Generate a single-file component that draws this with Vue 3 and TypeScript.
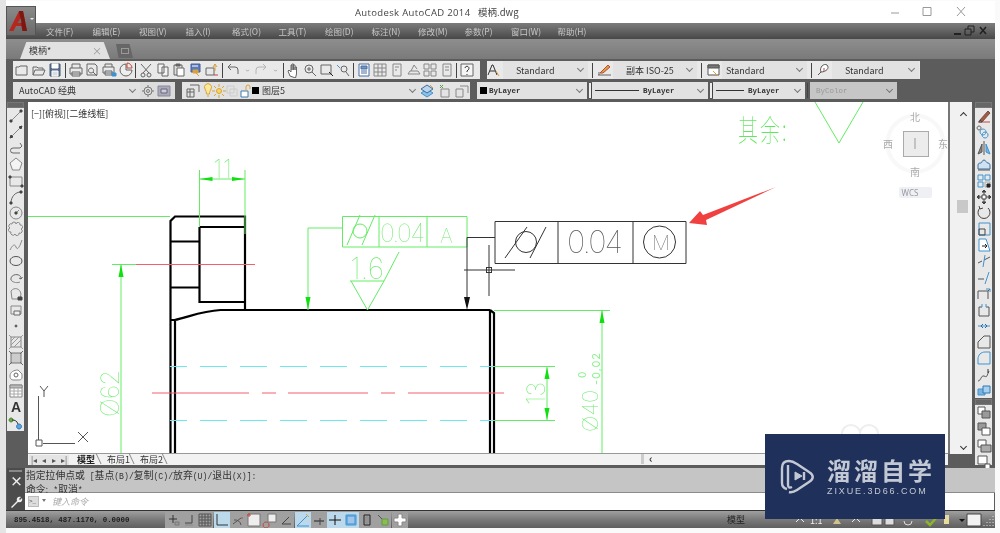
<script setup lang="ts">
import { h } from 'vue'

// [path, stroke, fill]
type Stroke = [string, string?, string?]

const G = '#666'
const B = '#3f93cf'
const R = '#c0483c'
const O = '#d9a23c'
const L = '#5f9e3c'

const icons: Record<string, Stroke[]> = {
  new: [['M2 5h3l1-1h7v9H2z']],
  open: [['M2 13V5h4l1 1h5v2M2 13l2-5h10l-2 5z']],
  save: [['M3 2h10v12H3z', '#445a78', '#5c6f8c'], ['M5 2h6v4H5z', '#fff', '#fff'], ['M5 9h6v5H5z', '#fff', '#d8dde4']],
  print: [['M4 6V2h8v4M2 6h12v6H2zM4 10h8v4H4z']],
  preview: [['M3 2h8l2 2v9H3zM7 6a2.500 2.500 0 1 0 .1 0M9 10l4 4']],
  plot: [['M4 5V2h7v3M2 5h11v6H2zM4 9h7v4H4z'], ['M11 11h4v3h-4z', B, B]],
  publish: [['M8 2a6 6 0 1 0 6 6H8z', G, '#eee'], ['M9 1v5h5a5 5 0 0 0-5-5z', R]],
  cut: [['M3 2l8 9M13 2L5 11M3 13a2 2 0 1 0 4 0 2 2 0 1 0-4 0M9 13a2 2 0 1 0 4 0 2 2 0 1 0-4 0']],
  copy: [['M3 2h6v9H3zM7 5h6v9H7z', G, '#f4f4f4']],
  paste: [['M3 3h8v10H3z', G, '#ddd'], ['M6 6h7v8H6z', G, '#fff'], ['M5 2h4v2H5z', G, G]],
  match: [['M3 2h9v8H3z', '#405f9a', '#5d7dba'], ['M6 9l5 5', O], ['M5 8h5v3H5z', O, O], ['M4 4h6', '#fff']],
  block: [['M2 6h8v7H2z'], ['M11 2v7M9 5l2-3 2 3', O], ['M10 13h4', R]],
  undo: [['M13 12V8a3 3 0 0 0-3-3H3M6 2L3 5l3 3']],
  redo: [['M3 12V8a3 3 0 0 1 3-3h7M10 2l3 3-3 3', '#b5b5b5']],
  drop: [['M6 7l2 2 2-2', '#888']],
  pan: [['M5 14L3 9l1-1 2 2V3l1 0v5-6h1.500v6-5H10v5-3h1.500v7l-1 4z', G, '#fff']],
  zoom1: [['M3 7a4 4 0 1 0 8 0 4 4 0 1 0-8 0M10 10l4 4M7 5v4M5 7h4']],
  zoom2: [['M2 3h10v9H2z'], ['M10 10l4 4', '#222']],
  zoom3: [['M6 7a3 3 0 1 0 6 0 3 3 0 1 0-6 0M11 10l3 4'], ['M2 3l3 3', B]],
  props: [['M3 2h10v12H3z', '#4b6ea0', '#fff'], ['M5 4h6v3H5z', '#4b6ea0', '#6f93c4'], ['M5 9h6M5 11h6', '#4b6ea0']],
  grid: [['M2 2h12v12H2zM2 6h12M2 10h12M6 2v12M10 2v12', '#888']],
  sheet: [['M4 2h8v12H4zM6 5h4M6 8h2', '#888']],
  tool: [['M2 12h12l-2-3H4zM5 9l3-6 3 4', '#888']],
  calc: [['M2 2h5v5H2zM9 9h5v5H9zM9 2h5v5H9zM2 9h5v5H2z', '#888']],
  pad: [['M4 2h8v12H4zM6 5h4M6 8h4', '#888']],
  help: [['M2 2h12v12H2z', G, '#f5f5f5'], ['M6 6a2 2 0 1 1 3 2l-1 1v1M8 12v1', '#333']],
  style: [['M3 13L7 3h1l4 10M5 9h5', '#333'], ['M11 9l3 5', O]],
  dim: [['M2 13h13M3 13v-3', G], ['M4 11l8-8 2 2-7 6z', R, O]],
  tbl: [['M3 3h11v10H3z', '#555', '#fff'], ['M3 3h11v3H3z', '#555', '#777'], ['M8 9l5 5', O]],
  mleader: [['M3 13l3-3M6 10c-2-5 3-9 6-7 3 3-1 7-6 7z', '#555', '#fff'], ['M9 6v3', R]],
  gear: [['M4 8a4 4 0 1 0 8 0 4 4 0 1 0-8 0M6.500 8a1.500 1.500 0 1 0 3 0 1.500 1.500 0 1 0-3 0M8 2v2M8 12v2M2 8h2M12 8h2', '#777']],
  wspace: [['M2 3h12v10H2z', '#889', '#aab'], ['M5 6h6v4H5z', '#667', '#ccd']],
  layer: [['M2 6h7v8H2zM5 2h9v7M2 9h7M5 6v8']],
  bulb: [['M5 6a3.500 3.500 0 1 1 6 0c-1 2-1.500 3-1.500 5h-3c0-2-.5-3-1.500-5zM7 13h2', O, '#fbe99a']],
  sun: [['M5.500 8a2.500 2.500 0 1 0 5 0 2.500 2.500 0 1 0-5 0', O, '#f5d860'], ['M8 1v3M8 12v3M1 8h3M12 8h3M3 3l2 2M11 11l2 2M3 13l2-2M11 5l2-2', O]],
  frz: [['M3 3h7v7H3zM6 6h7v7H6z', '#ccc']],
  lock: [['M3 8h7v6H3z', '#3f7fb0', '#fff'], ['M8 8V4a2 2 0 0 1 4 0v2', O]],
  lyr1: [['M2 10l6-4 6 4-6 4z', B, '#8bc0e8'], ['M2 6l6-4 6 4-6 4z', '#406c9a', '#b9d4ec'], ['M11 2l3 3', O]],
  lyr2: [['M4 6h8v8H4z', '#888'], ['M3 2l3 3M6 2L3 5', L]],
  lyr3: [['M2 6h7v8H2zM6 3h8v7', '#888']],
  line: [['M3 13L13 3', '#888'], ['M2 12h2v2H2zM12 2h2v2h-2z', '#444', '#444']],
  xline: [['M2 14L14 2', '#888'], ['M2 14l3-1-2-2zM14 2l-3 1 2 2z', '#444', '#444']],
  poly: [['M12 3l2 3-2 2H5a2.500 2.500 0 0 0 0 5h7', G]],
  pentagon: [['M8 2l6 5-2.500 7h-7L2 7z', '#888', '#f4f4f4']],
  rect: [['M2 4h12v9H2z', '#888'], ['M1 3h2v2H1zM13 12h2v2h-2z', '#444', '#444']],
  arc: [['M3 14C3 8 7 3 13 3', G], ['M2 13h2v2H2zM12 2h2v2h-2z', '#444', '#444']],
  circle: [['M2 8a6 6 0 1 0 12 0 6 6 0 1 0-12 0M8 8l3-3', '#888'], ['M7 7h2v2H7z', '#444', '#444']],
  cloud: [['M4 3a2 2 0 0 1 4 0 2 2 0 0 1 4 1 2 2 0 0 1 1 4 2 2 0 0 1-2 4 2 2 0 0 1-4 1 2 2 0 0 1-4-2 2 2 0 0 1-1-4 2 2 0 0 1 2-4z', '#888']],
  spline: [['M2 13c3-6 5-6 6-3s3 2 6-7', '#888']],
  ellipse: [['M2 8c0-6 12-6 12 0s-12 6-12 0z', '#555']],
  earc: [['M3 10C2 3 14 3 13 9M13 9l1.500-2M13 9l-2-1', G], ['M3 10c2 3 7 3 9 2', '#888']],
  insert: [['M3 5c3-4 9-3 10 3l-1 5H4z', '#888'], ['M10 11h4v3h-4z', '#444', '#444']],
  mkblock: [['M3 4h10v8H3z', '#888'], ['M6 9h6v4H6z', '#666', '#eee']],
  point: [['M7.200 7.200h1.600v1.600H7.200z', '#555', '#555']],
  hatch: [['M3 3h10v10H3z', '#888'], ['M1 1l3 3M15 1l-3 3M1 15l3-3M15 15l-3-3M3 7l4-4M3 11l8-8M6 13l7-7', '#999']],
  grad: [['M3 3h10v10H3z', '#777', '#ccc'], ['M1 1l3 3M15 1l-3 3M1 15l3-3M15 15l-3-3', '#666']],
  region: [['M2 9c0-4 4-6 8-6l4 4v3c0 3-2 3-5 3H5c-2 0-3-2-3-4z', '#888', '#fff'], ['M6 8a2 2 0 1 0 4 0 2 2 0 1 0-4 0', '#666']],
  table: [['M2 2h12v12H2z', '#888', '#fff'], ['M2 2h12v3H2z', '#888', '#bbb'], ['M2 8h12M2 11h12M6 5v9M10 5v9', '#aaa']],
  addsel: [['M3 3a2 2 0 1 0 .1 0', '#4c8a2e', '#6aa84f'], ['M4 5c3 0 5 1 6 4', '#333'], ['M11 9a2.500 2.500 0 1 0 .1 0', '#2c78b8', '#5aa5dc']],
  erase: [['M2 14h12', R], ['M4 12l8-9 2 2-8 9z', '#7a4a3a', '#a05a4a'], ['M4 12l2 2-3 0z', '#444']],
  ccopy: [['M3 2a2 2 0 1 0 .1 0', '#666'], ['M9 8a3 3 0 1 0 .1 0M7 5a3 3 0 1 0 .1 0', B]],
  mirror: [['M8 1v14', '#555'], ['M6 4v8l-4 2z', '#555', '#888'], ['M10 4v8l4 2z', B, '#7ab3dd']],
  offset: [['M2 13V9c0-2 2-2 3-2s1-3 3-3 2 3 4 3 2 2 2 3v3z', '#3a6f9f', '#cfe2f2'], ['M2 14h12', '#555']],
  array: [['M2 2h5v5H2zM9 2h5v5H9zM2 9h5v5H2z', B], ['M9 9h5v5H9z', '#aaa'], ['M11 11h3v3h-3z', '#222', '#222']],
  move: [['M8 2v12M2 8h12', '#444'], ['M8 1l2 2H6zM8 15l2-2H6zM1 8l2 2V6zM15 8l-2 2V6z', '#444', '#444'], ['M6 6h4v4H6z', '#444', '#fff']],
  rotate: [['M4 3a6 6 0 1 0 8 0', '#444'], ['M3 1l1 3 3-1', '#444']],
  scale: [['M3 2h11v12H3z', B], ['M3 8h6v6H3z', '#444']],
  stretch: [['M3 2h7l4 12H3z', B, '#fff'], ['M6 9h5M9 7l2 2-2 2', '#222']],
  trim: [['M2 10l4-2M8 7l6-3', '#555'], ['M9 2L7 14', B]],
  extend: [['M2 9h6', '#555'], ['M13 2L9 14', B]],
  brk1: [['M2 13V5h10v8M12 5l2-2', '#555'], ['M10 3h4v3', B]],
  brk2: [['M3 14V5h3M10 5h3v9M3 14h10', '#555'], ['M6 2v3M10 2v3', B]],
  join: [['M2 8h12', B], ['M7 6l-2 2 2 2M9 6l2 2-2 2', '#2a6ea0']],
  chamfer: [['M2 14V8l6-6h6v12z', '#555']],
  fillet: [['M2 14V9c0-4 3-7 7-7h5v12z', B]],
  blend: [['M2 14c3 0 3-6 6-5s2 2 5-5', '#555'], ['M12 2v4', '#333']],
  explode: [['M2 6h7v6H2z', B, '#7ab3dd'], ['M7 3h7v7H7z', '#2c78b8', '#a8cfec']],
  front: [['M2 2h7v7H2z', '#555', '#fff'], ['M6 6h8v7H6z', '#555', '#999']],
  back: [['M2 2h8v7H2z', '#555', '#999'], ['M6 7h8v7H6z', '#555', '#fff']],
  above: [['M2 2h8v7H2z', '#555', '#fff'], ['M5 7h10v7H5z', '#555', '#aaa']],
  below: [['M2 2h9v8H2z', '#555', '#fff'], ['M9 10h5v5H9z', '#555', '#fff']],
  snap: [['M8 3v8M4 7h8', '#333'], ['M10 10h4v3h-4z', '#777', '#999']],
  infer: [['M11 3v8H4', '#444'], ['M4 13h8', '#888']],
  sgrid: [['M2 2h12v12H2zM5 2v12M8 2v12M11 2v12M2 5h12M2 8h12M2 11h12', '#555']],
  ortho: [['M3 2v11h11', '#333']],
  polar: [['M3 12L11 6M4 8a6 6 0 0 1 7 5', '#555'], ['M11 6h2', R]],
  osnap: [['M2 2h12v12H2z', '#777', '#eee'], ['M2 2v2h2V2z', R]],
  otrack: [['M6 2h8v8H6z', '#777', '#eee'], ['M4 10a3 3 0 1 0 .1 0', R]],
  ducs: [['M4 12l7-7M4 12h9', '#444']],
  dyn: [['M2 14L12 4M2 14h12', B], ['M11 2l3 3', O]],
  lw: [['M3 9h10', '#222'], ['M9 6v7', '#444']],
  tp: [['M2 8h12M8 3v10', '#111']],
  qp: [['M3 3h10v10H3zM4 4h8v8H4z', B, '#9fc5ea']],
  sel: [['M5 3h6v10H5z', '#222'], ['M7 5h2v6H7z', '#888']],
  sc: [['M3 3l4 4', '#555'], ['M7 7h6v6H7z', L, '#8bbc55']],
  plus: [['M6 2h4v4h4v4h-4v4H6v-4H2V6h4z', '#888', '#fff']],
}

const Ico = (props: { n: string }) =>
  h(
    'svg',
    { width: 16, height: 16, viewBox: '0 0 16 16', class: 'ico' },
    (icons[props.n] ?? []).map(([d, stroke, fill]) =>
      h('path', { d, stroke: stroke ?? G, fill: fill ?? 'none', 'stroke-width': 1 }),
    ),
  )
Ico.props = ['n']

const menus = ['文件(F)', '编辑(E)', '视图(V)', '插入(I)', '格式(O)', '工具(T)', '绘图(D)', '标注(N)', '修改(M)', '参数(P)', '窗口(W)', '帮助(H)']

// '|' marks a separator
const stdBar = ['new', 'open', 'save', '|', 'print', 'preview', 'plot', 'publish', '|', 'cut', 'copy', 'paste', 'match', 'block', '|', 'undo', 'drop', 'redo', 'drop', '|', 'pan', 'zoom1', 'zoom2', 'zoom3', '|', 'props', 'grid', 'sheet', 'tool', 'calc', 'pad', '|', 'help']
const drawBar = ['line', 'xline', 'poly', 'pentagon', 'rect', 'arc', 'circle', 'cloud', 'spline', 'ellipse', 'earc', 'insert', 'mkblock', 'point', 'hatch', 'grad', 'region', 'table', 'A', 'addsel']
const modifyBar = ['erase', 'ccopy', 'mirror', 'offset', 'array', 'move', 'rotate', 'scale', 'stretch', 'trim', 'extend', 'brk1', 'brk2', 'join', 'chamfer', 'fillet', 'blend', 'explode']
const orderBar = ['front', 'back', 'above', 'below']
const statusBtns = [
  { n: 'snap' }, { n: 'infer' }, { n: 'sgrid' }, { n: 'ortho', on: true }, { n: 'polar' }, { n: 'osnap' }, { n: 'otrack' }, { n: 'ducs' },
  { n: 'dyn', on: true }, { n: 'lw' }, { n: 'tp', on: true }, { n: 'qp', on: true }, { n: 'sel' }, { n: 'sc' }, { n: 'plus' },
]
const cyan = [366.5, 420.5]
</script>

<template>
  <div class="page">
    <div class="window">
      <header class="title">
        <span class="app-name">Autodesk AutoCAD 2014</span>
        <span class="file-name">模柄.dwg</span>
        <div class="win-btns">
          <svg width="90" height="14" viewBox="0 0 90 14">
            <path d="M0 8h8" stroke="#999" fill="none" />
            <path d="M32 2.500h8v8h-8z" stroke="#999" fill="none" />
            <path d="M66 2l8 9M74 2l-8 9" stroke="#999" fill="none" />
          </svg>
        </div>
      </header>

      <nav class="menu">
        <span v-for="m in menus" :key="m" class="menu-item">{{ m }}</span>
        <div class="doc-btns">
          <svg width="36" height="12" viewBox="0 0 36 12">
            <path d="M0 9h7" stroke="#222" stroke-width="2" />
            <path d="M11 4h6v6h-6zM14 4V1h6v6h-3" stroke="#222" fill="none" />
            <path d="M26 2l6 7M32 2l-6 7" stroke="#222" stroke-width="1.600" />
          </svg>
        </div>
      </nav>

      <div class="tabs">
        <div class="doc-tab"><span>模柄*</span><i>×</i></div>
        <div class="new-tab"><b></b></div>
      </div>

      <div class="bars">
        <div class="bar-row">
          <div class="bar std">
            <template v-for="(n, i) in stdBar" :key="i">
              <span v-if="n === '|'" class="sep"></span>
              <Ico v-else-if="n === 'drop'" :n="n" class="tiny" />
              <Ico v-else :n="n" />
            </template>
          </div>
          <div class="bar styles">
            <Ico n="style" class="first" />
            <div class="combo w85"><span class="mid">Standard</span><em></em></div>
            <span class="sep"></span>
            <Ico n="dim" class="wide" />
            <div class="combo w84"><span class="mid">副本 ISO-25</span><em></em></div>
            <span class="sep"></span>
            <Ico n="tbl" class="wide" />
            <div class="combo w85"><span class="near">Standard</span><em></em></div>
            <span class="sep"></span>
            <Ico n="mleader" class="wide" />
            <div class="combo w87"><span class="mid">Standard</span><em></em></div>
          </div>
        </div>
        <div class="bar-row low">
          <div class="bar work">
            <div class="combo w125"><span class="pad">AutoCAD 经典</span><em></em></div>
            <Ico n="gear" /><Ico n="wspace" />
          </div>
          <div class="bar layers">
            <Ico n="layer" class="lyr" />
            <div class="combo w220">
              <Ico n="bulb" /><Ico n="sun" class="tight" /><Ico n="frz" class="tight2" /><Ico n="lock" class="tight3" />
              <i class="swatch pull"></i><span class="lname">图层5</span><em></em>
            </div>
            <div class="lyr-tools"><Ico n="lyr1" /><Ico n="lyr2" /><Ico n="lyr3" /></div>
          </div>
          <div class="bar props">
            <div class="combo w110"><i class="swatch s2"></i><span class="by">ByLayer</span><em></em></div>
            <span class="sep light"></span>
            <div class="combo w116"><i class="rule r48"></i><span class="by">ByLayer</span><em></em></div>
            <span class="sep light"></span>
            <div class="combo w92"><i class="rule r28"></i><span class="by">ByLayer</span><em></em></div>
            <span class="sep narrow"></span>
            <div class="combo w87 off"><span class="by">ByColor</span><em></em></div>
          </div>
        </div>
      </div>

      <main class="work-area">
        <aside class="side left-side">
          <div class="dock">
            <span class="grip"></span>
            <div class="stack">
              <template v-for="n in drawBar" :key="n">
                <span v-if="n === 'A'" class="txt-tool">A</span>
                <Ico v-else :n="n" />
              </template>
            </div>
          </div>
        </aside>

        <div class="center">
          <svg class="canvas" viewBox="28 102 920 351" width="920" height="351">
            <text x="31" y="117" class="vp">[−][俯视][二维线框]</text>

            <!-- outline of the part -->
            <g class="part">
              <path d="M170.500 453V221l4.500-4.500h70V310M199.500 227h45.500M199.500 227v75h45.500M170.500 241.500h29M170.500 287.500h29" />
              <path d="M170.500 320h4c12-2 26-9 46-10H490M175 320v133M490 310v143M490 310l4 3v140" />
            </g>

            <!-- green dimensions -->
            <g class="green">
              <path d="M28 216.500h142M199.500 170v57M245 170v64M112 264.500h24M121 264v189" />
              <path d="M199.500 179H245M308 228h34.500M308 228v82M494 310.500h116M602 310v143M494 366.500h61M494 420.500h61M547 366v54" />
              <path d="M342.500 216.500H467V247H342.500zM379 216.500V247M427 216.500V247" />
              <path d="M350 281h34M384 281l15-29M351 281l16.500 29L384 281" />
              <path d="M347 245l13-30M362 245l13-30M815 102l24 41 24-41" />
              <circle cx="360" cy="231" r="7" />
            </g>
            <g class="arrows">
              <path d="M199.500 179l13-2v4zM245 179l-13-2v4zM121 264l-2.500 13h5zM308 310l-2.500-13h5zM602 310l-2.500 13h5zM547 367l-2.500 12h5zM547 420l-2.500-12h5z" />
            </g>
            <g class="cad-text">
              <text x="213" y="178" font-size="25" textLength="19">11</text>
              <text x="380" y="242" font-size="25" textLength="45">0.04</text>
              <text x="440" y="243" font-size="20">A</text>
              <text x="350" y="279" font-size="29" textLength="34">1.6</text>
              <text transform="translate(119 417) rotate(-90)" font-size="25" textLength="47">Ø62</text>
              <text transform="translate(545 405) rotate(-90)" font-size="25" textLength="23">13</text>
              <text transform="translate(598 432) rotate(-90)" font-size="22" textLength="42">Ø40</text>
              <text transform="translate(586 378) rotate(-90)" font-size="10" class="small">0</text>
              <text transform="translate(600 385) rotate(-90)" font-size="11" textLength="32" class="small">-0,02</text>
              <text transform="translate(738 141) scale(1 1.500)" font-size="20" class="zh-note">其余:</text>
            </g>

            <!-- centre lines -->
            <path v-for="y in cyan" :key="y" class="cyan" :d="`M170 ${y}H494`" />
            <path class="red" d="M136 264.500H255M152 393h97M262 393h14M288 393h80M381 393h14M408 393h96" />

            <!-- black control frame -->
            <g class="frame">
              <path d="M495 221.500h191v42H495zM558 221.500v42M633 221.500v42M467 237.500h28M467 237.500V298" />
              <circle cx="526" cy="242" r="10.500" />
              <path d="M505 258l22-31M530 258l16-31" />
              <circle cx="659.500" cy="242" r="16" />
            </g>
            <path class="head" d="M467 310l-3-13h6z" />
            <text x="567" y="253" class="frame-text" font-size="31" textLength="56">0.04</text>
            <text x="652" y="250" class="frame-text" font-size="20">M</text>

            <!-- crosshair -->
            <g class="cross">
              <path d="M464 270h51M489 245v51" />
              <rect x="486.500" y="267.500" width="5" height="5" />
            </g>

            <!-- leader arrow -->
            <path class="mark" d="M776 187l-70 33 1 5-18-2 11-12 3 4z" />

            <!-- ucs icon -->
            <g class="ucs">
              <path d="M38.500 396v44M43 443.500h32M36 440h6v6h-6zM40 386l4 5 4-5M44 391v6M78 432l10 10M88 432l-10 10" />
            </g>

            <!-- view cube -->
            <g class="cube">
              <circle cx="915.500" cy="143.500" r="28" />
              <rect x="903.500" y="131.500" width="25" height="25" />
              <path d="M915 138v11" />
              <text x="915" y="121">北</text>
              <text x="915" y="176">南</text>
              <text x="888" y="148">西</text>
              <text x="943" y="148">东</text>
              <rect x="899" y="187" width="33" height="11" rx="2" class="wcs-bg" />
              <text x="910" y="196" class="wcs">WCS</text>
            </g>

            <path class="ghost" d="M842 434c0-12 18-12 18 0M860 434c0-12 18-12 18 0" />
          </svg>

          <div class="layout-bar">
            <div class="nav"><b>|◂</b><b>◂</b><b>▸</b><b>▸|</b></div>
            <span class="ltab cur">模型</span>
            <span class="ltab two">布局1</span>
            <span class="ltab two">布局2</span>
            <span class="h-grip"></span>
            <span class="h-arrow">‹</span>
          </div>
        </div>

        <div class="vscroll">
          <span class="chev up"></span>
          <span class="thumb"></span>
          <span class="chev down"></span>
        </div>

        <aside class="side right-side">
          <div class="dock">
            <span class="grip"></span>
            <div class="stack"><Ico v-for="n in modifyBar" :key="n" :n="n" /></div>
          </div>
          <div class="dock second">
            <span class="grip"></span>
            <div class="stack"><Ico v-for="n in orderBar" :key="n" :n="n" /></div>
          </div>
        </aside>
      </main>

      <section class="command">
        <div class="cmd-strip">
          <span class="dots"></span>
          <span class="strip-x">×</span>
          <svg class="wrench" width="14" height="14" viewBox="0 0 14 14"><path d="M2 12l6-6c-1-3 1-5 4-4L10 4l1 1 2-2c1 3-1 5-4 4l-6 6z" fill="#eee" /></svg>
        </div>
        <div class="cmd-main">
          <div class="history">
            <p><span class="zh">指定拉伸点或</span> [<span class="zh">基点</span>(B)/<span class="zh">复制</span>(C)/<span class="zh">放弃</span>(U)/<span class="zh">退出</span>(X)]:</p>
            <p><span class="zh">命令:</span> *<span class="zh">取消</span>*</p>
          </div>
          <div class="input">
            <span class="prompt">&gt;_</span><span class="prompt-drop"></span>
            <span class="hint">键入命令</span>
          </div>
        </div>
      </section>

      <footer class="status">
        <span class="coords">895.4518, 487.1170, 0.0000</span>
        <div class="st-btns">
          <span v-for="b in statusBtns" :key="b.n" class="st-btn" :class="{ on: b.on }"><Ico :n="b.n" /></span>
        </div>
        <div class="st-right">
          <span class="st-model">模型</span>
          <!-- x in this svg = page x - 763 -->
          <svg class="st-tail" width="232" height="16" viewBox="0 0 232 16">
            <path d="M33 10l4-4 4 4M89 10l4-4 4 4" stroke="#eee" fill="none" />
            <text x="47" y="12" class="scale">1:1</text>
            <path d="M70 12l4-6 4 6z" fill="#cfc28a" />
            <path d="M109 4h10v9h-10zM122 4h9v9h-9z" fill="#ddd" stroke="#555" />
            <path d="M141 9a4 4 0 1 0 8 0" stroke="#ddd" fill="none" />
            <path d="M163 9l4 4 7-8" stroke="#8ab628" stroke-width="2.500" fill="none" />
            <path d="M181 3h5v9h-5z" fill="#e6dca0" />
            <path d="M196 7l3 3 3-3z" fill="#111" />
            <path d="M204 2h14v12h-14z" fill="#f2f2f2" stroke="#444" />
            <path d="M230 4v1M227 7v1M230 7v1M224 10v1M227 10v1M230 10v1M221 13v1M224 13v1M227 13v1M230 13v1" stroke="#ddd" />
          </svg>
        </div>
      </footer>
    </div>

    <!-- application button, sits over title and menu bars -->
    <div class="app-btn">
      <svg width="30" height="30" viewBox="0 0 30 30">
        <path d="M3 25L13 5h4l4 20h-4.500l-1-5H10l-2.500 5z" fill="#b5261e" />
        <path d="M13 5h4l4 20h-4.500z" fill="#7e1712" />
        <path d="M11.500 17h4l-.8-5z" fill="#6a6a6a" />
        <path d="M24 12l2 2 2-2z" fill="#eee" />
      </svg>
    </div>

    <div class="logo-ad">
      <svg class="ad-mark" width="36" height="36" viewBox="0 0 36 36" fill="none" stroke="#c3c9d4" stroke-width="2.400">
        <path d="M7 30C3 29 2 27 2 24V9c0-5 3-7 7-7 3 0 5 1 8 3l12 8c5 3 5 7 0 10L17 31c-3 2-5 3-8 2" />
        <path d="M8 6v20c0 3 2 3 4 2" />
        <path d="M15 13l7 4-7 4z" fill="#c3c9d4" stroke-width="1" />
        <path d="M24 13v8" />
      </svg>
      <div class="ad-text">
        <strong>溜溜自学</strong>
        <span>ZIXUE.3D66.COM</span>
      </div>
    </div>
  </div>
</template>

<style scoped>
.page {
  position: relative;
  width: 1000px;
  height: 533px;
  overflow: hidden;
  box-sizing: border-box;
  padding: 1px 5px 5px 6px;
  background: linear-gradient(90deg, #e4e4e4 0 6px, #fafafa 6px);
  font-family: "Noto Sans CJK SC", "Noto Sans", sans-serif;
  filter: blur(0.4px);
}
.window {
  height: 527px;
  display: flex;
  flex-direction: column;
  background: #5c5c5c;
}
.app-btn {
  position: absolute;
  left: 6px;
  top: 6px;
  width: 30px;
  height: 30px;
  box-sizing: border-box;
  border: 1px solid #555;
  background: linear-gradient(#8a8a8a, #6a6a6a);
  overflow: hidden;
}
.app-btn svg { display: block; margin: -1px; }
.title {
  height: 22px;
  flex: none;
  display: flex;
  align-items: center;
  background: #fff;
  font-size: 9.5px;
  color: #444;
  padding-left: 349px;
}
.app-name { width: 123px; letter-spacing: 0.35px; font-family: "Open Sans", sans-serif; }
.file-name { font-size: 9.5px; }
.win-btns { margin-left: auto; margin-right: 14px; display: flex; }

.menu {
  height: 16px;
  flex: none;
  display: flex;
  align-items: center;
  padding-left: 40px;
  background: linear-gradient(#7c7c7c, #484848);
  font-size: 8.5px;
  color: #c6c6c6;
}
.menu-item { width: 46.500px; flex: none; }
.doc-btns { margin-left: auto; margin-right: 5px; display: flex; }

.tabs {
  height: 20px;
  flex: none;
  display: flex;
  align-items: flex-end;
  gap: 6px;
  padding-left: 14px;
  background: linear-gradient(#8e8e8e, #7a7a7a);
}
.doc-tab {
  width: 90px;
  height: 17px;
  display: flex;
  align-items: center;
  justify-content: space-between;
  box-sizing: border-box;
  padding: 0 8px 0 9px;
  background: #e2e2e2;
  clip-path: polygon(0 100%, 7% 0, 93% 0, 100% 100%);
  font-size: 9px;
  color: #333;
}
.doc-tab i { font-style: normal; color: #999; font-size: 10px; }
.new-tab {
  width: 17px;
  height: 14px;
  margin-bottom: 1px;
  display: flex;
  align-items: center;
  justify-content: center;
  background: #666;
  clip-path: polygon(0 0, 80% 0, 100% 100%, 15% 100%);
}
.new-tab b { width: 6px; height: 4px; border: 1px solid #999; }

.bars {
  height: 43px;
  flex: none;
  box-sizing: border-box;
  padding: 2px 0 0 7px;
  display: flex;
  flex-direction: column;
  gap: 3px;
}
.bar-row { display: flex; gap: 7px; height: 18px; }
.bar-row.low { height: 17px; gap: 7px; }
.bar {
  display: flex;
  align-items: center;
  background: #e9e9e9;
  height: 100%;
}
.std { width: 467px; box-sizing: border-box; padding-left: 1px; gap: 0.600px; }
.std .sep { margin: 0 1.200px; }
.styles { width: 433px; }
.work { width: 162px; background: #dcdcdc; }
.layers { width: 288px; background: #e4e4e4; }
.props { margin-left: 0; background: transparent; }
.sep { width: 1px; height: 15px; margin: 0 4px; background: #444; flex: none; }
.sep.light { width: 2px; margin: 0 1px 0 2px; background: #eee; box-shadow: 1px 0 #444; }
.sep.narrow { margin: 0 2px; }

:deep(.ico) { display: block; flex: none; }
:deep(.ico.tiny) { width: 11px; height: 11px; }
:deep(.ico.first) { margin: 0 2px 0 -2px; }
:deep(.ico.wide) { margin: 0 1px 0 -1px; }
:deep(.ico.tight) { margin-left: -5px; }
:deep(.ico.tight2) { margin-left: -3px; }
:deep(.ico.tight3) { margin-left: -2px; }
:deep(.ico.lyr) { margin: 0 -1px 0 3px; }

.combo {
  position: relative;
  height: 100%;
  flex: none;
  display: flex;
  align-items: center;
  background: #e2e2e2;
  font-size: 9px;
  color: #333;
  box-sizing: border-box;
}
.combo em {
  position: absolute;
  right: 5px;
  top: 50%;
  width: 4px;
  height: 4px;
  margin-top: -4px;
  border-right: 1px solid #777;
  border-bottom: 1px solid #777;
  transform: rotate(45deg);
}
.combo > span { white-space: nowrap; }
.combo > span.pad { padding-left: 6px; }
.combo > span.mid { padding-left: 13px; }
.combo > span.near { padding-left: 4px; }
.w85 { width: 85px; }
.w84 { width: 84px; }
.w87 { width: 87px; }
.w125 { width: 127px; }
.w220 { width: 220px; }
.w110 { width: 110px; padding-left: 3px; }
.w116 { width: 116px; padding-left: 3px; }
.w92 { width: 92px; padding-left: 3px; }
.off { background: #c6c6c6; color: #999; padding-left: 6px; }
.swatch { width: 7px; height: 7px; background: #000; margin: 0 3px 0 0; flex: none; }
.swatch.pull { margin-left: -2px; }
.s2 { margin-right: 2px; }
.lname { margin-left: 0; }
.lyr-tools { display: flex; gap: 1.500px; margin-left: -1px; }
.by { font-family: "Liberation Mono", monospace; font-size: 7.500px; font-weight: 700; }
.off .by { font-weight: 400; }
.rule { height: 1px; background: #333; flex: none; margin-right: 4px; }
.r48 { width: 44px; }
.r28 { width: 28px; }

.work-area {
  height: 363px;
  flex: none;
  display: flex;
}
.side { width: 19px; flex: none; display: flex; flex-direction: column; }
.left-side { width: 22px; margin-left: 0; padding-left: 1px; box-sizing: border-box; }
.dock {
  width: 17px;
  background: #e8e8e8;
  flex: none;
}
.left-side .dock { height: 329px; }
.right-side { width: 22px; padding-left: 3px; box-sizing: border-box; }
.right-side .dock { height: 296px; }
.right-side .dock.second { height: 66px; margin-top: 1px; }
.grip { display: block; height: 6px; background: #666; border: 1px solid #777; box-sizing: border-box; }
.stack { display: flex; flex-direction: column; gap: 0.170px; padding: 0 0 0 1px; }
.dock.second .stack { gap: 0.300px; }
.txt-tool { height: 16px; line-height: 16px; text-align: center; font: 700 14px/16px "Liberation Sans", sans-serif; color: #333; width: 16px; }
.center { width: 920px; flex: none; display: flex; flex-direction: column; }
.canvas { display: block; background: #fff; flex: none; }
.vp { font-size: 9px; fill: #333; }
.part { fill: none; stroke: #000; stroke-width: 2.200; }
.green { fill: none; stroke: #63ec63; stroke-width: 1; }
.arrows { fill: #0fe00f; }
.cad-text text { fill: #6fea6f; font-family: Inter, "Liberation Sans", sans-serif; font-weight: 100; }
.cad-text .small { font-weight: 400; fill: #8ef08e; }
.cad-text .zh-note { fill: #5fe85f; font-family: "Noto Sans CJK SC", sans-serif; font-weight: 100; letter-spacing: 2px; }
.cyan { fill: none; stroke: #6de9ee; stroke-width: 1; stroke-dasharray: 27 13; stroke-dashoffset: 10; }
.red { fill: none; stroke: #f2606a; stroke-width: 1; }
.frame { fill: none; stroke: #333; stroke-width: 1; }
.head { fill: #111; }
.frame-text { fill: #555; font-family: Inter, "Liberation Sans", sans-serif; font-weight: 100; }
.cross { fill: none; stroke: #333; stroke-width: 1; }
.mark { fill: #f04040; }
.ucs { fill: none; stroke: #555; stroke-width: 1; }
.cube circle { fill: none; stroke: #f8f8f8; stroke-width: 4; }
.cube rect { fill: #ececec; stroke: #aaa; }
.cube path { stroke: #999; }
.cube text { font-size: 10px; fill: #aaa; text-anchor: middle; }
.cube .wcs-bg { fill: #eef0f4; stroke: none; }
.cube .wcs { font-size: 8px; fill: #9a9aa4; font-family: "Noto Sans", sans-serif; }
.ghost { fill: none; stroke: #eee; stroke-width: 2; }

.layout-bar {
  height: 12px;
  flex: none;
  display: flex;
  align-items: center;
  position: relative;
  box-sizing: border-box;
  background: #f2f2f2;
  border-top: 1px solid #999;
  font-size: 9px;
  color: #333;
  padding-left: 1px;
}
.nav { display: flex; width: 40px; }
.nav b { width: 10px; text-align: center; font-size: 8px; line-height: 10px; font-weight: 400; color: #555; background: #e4e4e4; white-space: nowrap; overflow: hidden; }
.ltab { position: relative; width: 22px; padding-left: 8px; flex: none; white-space: nowrap; }
.ltab.two { width: 25px; }
.ltab::after {
  content: "";
  position: absolute;
  right: 0;
  top: 0;
  height: 11px;
  border-left: 1px solid #888;
  transform: skewX(25deg);
}
.ltab.cur { font-weight: 700; color: #222; }
.h-grip { position: absolute; left: 613px; top: 0; width: 3px; height: 10px; background: #ccc; }
.h-arrow { position: absolute; left: 621px; top: -4px; font-size: 11px; font-weight: 700; color: #333; }

.vscroll {
  width: 24px;
  flex: none;
  position: relative;
  background: #f1f1f1;
  border-left: 2px solid #777;
  box-sizing: border-box;
  height: 352px;
}
.chev {
  position: absolute;
  left: 11px;
  width: 4px;
  height: 4px;
  border-left: 1.500px solid #333;
  border-top: 1.500px solid #333;
}
.chev.up { top: 11px; transform: rotate(45deg); }
.chev.down { top: 342px; transform: rotate(225deg); }
.thumb { position: absolute; left: 7px; top: 98px; width: 11px; height: 13px; background: #c8c8c8; }

.command { height: 45px; flex: none; display: flex; padding-top: 3px; box-sizing: border-box; }
.cmd-strip {
  width: 18px;
  margin-left: 1px;
  position: relative;
  flex: none;
  background: #4c4c4c;
}
.dots { position: absolute; left: 2px; top: 2px; width: 13px; height: 2px; background: #888; }
.strip-x { position: absolute; left: 3px; top: 6px; color: #eee; font-size: 13px; font-weight: 700; line-height: 14px; }
.wrench { position: absolute; left: 2px; top: 27px; }
.cmd-main { flex: 1; display: flex; flex-direction: column; min-width: 0; }
.history {
  height: 25px;
  flex: none;
  background: #c5c5c5;
  border-bottom: 1px solid #8a8a8a;
  box-sizing: border-box;
  padding: 1px 0 0 1px;
  font-family: "Liberation Mono", monospace;
  font-size: 8.200px;
  color: #333;
  line-height: 12px;
}
.history p { margin: 0; white-space: pre; }
.zh { font-family: "Noto Sans CJK SC", sans-serif; font-size: 9.800px; }
.input {
  flex: 1;
  display: flex;
  align-items: center;
  background: #fff;
  padding-left: 3px;
  margin-right: 1px;
}
.prompt {
  width: 11px;
  height: 11px;
  background: #ddd;
  border: 1px solid #bbb;
  font: 6px "Liberation Mono", monospace;
  line-height: 10px;
  color: #444;
  box-sizing: border-box;
}
.prompt-drop { width: 0; height: 0; margin: 0 6px 0 3px; border: 2px solid transparent; border-top: 3px solid #777; }
.hint { font-size: 9px; font-style: italic; color: #aaa; }

.status {
  height: 18px;
  flex: none;
  display: flex;
  align-items: center;
  border-top: 1px solid #333;
  box-sizing: border-box;
  background: linear-gradient(#a0a0a0 0, #7a7a7a 50%, #5f5f5f 100%);
  font-size: 9px;
}
.coords { width: 159px; flex: none; padding-left: 8px; box-sizing: border-box; font-family: "Liberation Mono", monospace; font-size: 7.400px; font-weight: 700; color: #1c1c1c; }
.st-btns { display: flex; gap: 0.200px; }
.st-btn { width: 16px; height: 16px; display: block; background: #a0a0a0; }
.st-btn.on { background: #bcd9ec; }
.st-right { margin-left: auto; display: flex; align-items: center; color: #222; }
.st-model { width: 36px; }
.st-tail { display: block; }
.scale { font-size: 9px; fill: #eee; }

.logo-ad {
  position: absolute;
  left: 765px;
  top: 434px;
  width: 180px;
  height: 85px;
  display: flex;
  align-items: center;
  box-sizing: border-box;
  padding: 0 0 0 15px;
  gap: 11px;
  background: #1f305a;
  color: #c3c9d4;
}
.ad-mark { flex: none; }
.ad-text { display: flex; flex-direction: column; }
.ad-text strong { font-size: 24px; line-height: 26px; font-weight: 700; letter-spacing: 3px; white-space: nowrap; }
.ad-text span { margin-top: 3px; font-family: "Liberation Sans", sans-serif; font-size: 9px; line-height: 10px; letter-spacing: 1.900px; white-space: nowrap; }
</style>

<style>
html, body { margin: 0; background: #fff; }
</style>
